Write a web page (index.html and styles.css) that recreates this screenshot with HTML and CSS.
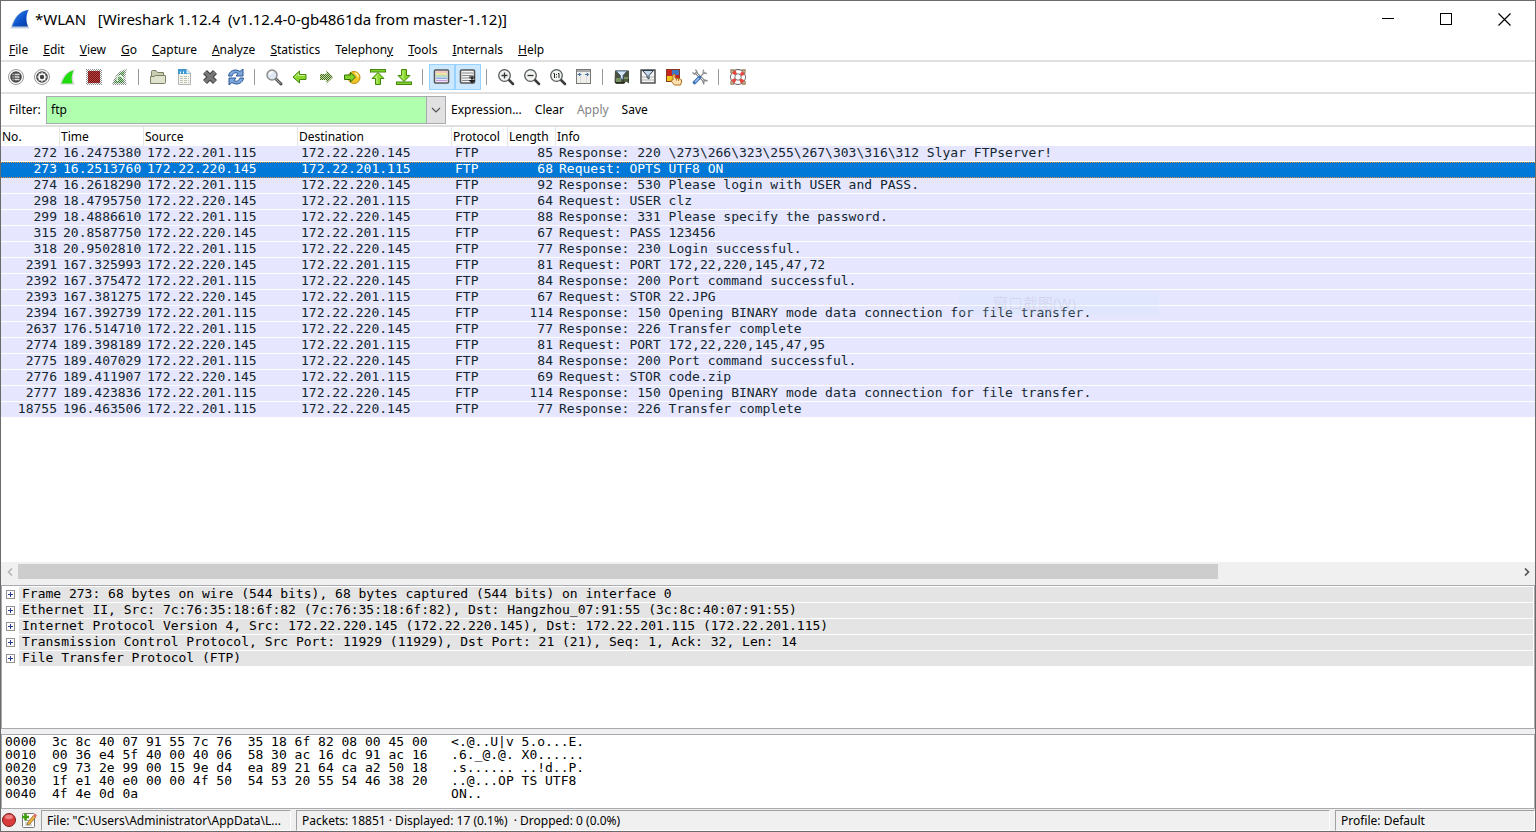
FILE: index.html
```html
<!DOCTYPE html>
<html lang="en">
<head>
    <meta charset="UTF-8">
    <meta name="viewport" content="width=device-width, initial-scale=1.0">
    <title>*WLAN [Wireshark 1.12.4]</title>
    <link rel="stylesheet" href="styles.css">
</head>
<body>

<div class="window">
    <header class="titlebar">
        <svg class="logo" width="20" height="20" viewBox="0 0 20 20">
            <defs>
                <linearGradient id="fin" x1="0" y1="0" x2="1" y2="1">
                    <stop offset="0" stop-color="#3c8ff0"/>
                    <stop offset="0.6" stop-color="#0b4fc8"/>
                    <stop offset="1" stop-color="#0a3f9c"/>
                </linearGradient>
            </defs>
            <path d="M0.500 19.500C3 10 8 2 19 0.500C15.500 6 16 14 19.500 19.500Z" fill="#c3cfdf"/>
            <path d="M2 17.500C5 9 9 2 18.500 1C15.500 6.500 16 13 18 17.500Z" fill="url(#fin)"/>
        </svg>
        <h1 class="title">*WLAN   [Wireshark 1.12.4  (v1.12.4-0-gb4861da from master-1.12)]</h1>
        <div class="window-buttons">
            <button type="button" aria-label="Minimize"><svg width="13" height="13" viewBox="0 0 13 13"><path d="M0 5.500H12" stroke="#000"/></svg></button>
            <button type="button" aria-label="Maximize"><svg width="13" height="13" viewBox="0 0 13 13"><rect x="0.500" y="0.500" width="11" height="11" fill="none" stroke="#000"/></svg></button>
            <button type="button" aria-label="Close"><svg width="13" height="13" viewBox="0 0 13 13"><path d="M0.500 0.500L12.500 12.500M12.500 0.500L0.500 12.500" stroke="#000" stroke-width="1.200"/></svg></button>
        </div>
    </header>

    <nav class="menubar">
        <a href="#"><u>F</u>ile</a>
        <a href="#"><u>E</u>dit</a>
        <a href="#"><u>V</u>iew</a>
        <a href="#"><u>G</u>o</a>
        <a href="#"><u>C</u>apture</a>
        <a href="#"><u>A</u>nalyze</a>
        <a href="#"><u>S</u>tatistics</a>
        <a href="#">Telephon<u>y</u></a>
        <a href="#"><u>T</u>ools</a>
        <a href="#"><u>I</u>nternals</a>
        <a href="#"><u>H</u>elp</a>
    </nav>

    <div class="toolbar">
        <button type="button" aria-label="Interfaces"><svg viewBox="0 0 18 18"><circle cx="9" cy="9" r="7.500" fill="#fff" stroke="#999"/><circle cx="9" cy="9" r="5.800" fill="#4a4a4a"/><path d="M5.500 6.500h1M5.500 9h1M5.500 11.500h1M7.500 6.500h5M7.500 9h5M7.500 11.500h5" stroke="#ddd" stroke-width="1.300"/></svg></button>
        <button type="button" aria-label="Capture options"><svg viewBox="0 0 18 18"><circle cx="9" cy="9" r="7.500" fill="#fff" stroke="#999"/><circle cx="9" cy="9" r="5.800" fill="#444"/><circle cx="9" cy="9" r="3" fill="#444" stroke="#fff" stroke-width="1.600"/><path d="M9 4.200v1.500M9 12.300v1.500M4.200 9h1.500M12.300 9h1.500M5.700 5.700l1 1M11.300 11.300l1 1M12.300 5.700l-1 1M6.700 11.300l-1 1" stroke="#fff" stroke-width="1.200"/></svg></button>
        <button type="button" aria-label="Start"><svg viewBox="0 0 18 18"><path d="M1 16.500C3 9 7 2.500 16 1.500C13.500 6 13.500 12 16 16.500Z" fill="#d8d8d8"/><path d="M2.500 15.500C5 9 8 4 14.500 2.500C12.500 7 12 11 13.500 15.500Z" fill="#1fdd0d"/></svg></button>
        <button type="button" aria-label="Stop"><svg viewBox="0 0 18 18"><defs><pattern id="dots-red" width="2" height="2" patternUnits="userSpaceOnUse"><rect width="2" height="2" fill="#c43c3c"/><rect width="1" height="1" fill="#6b1a1a"/><rect x="1" y="1" width="1" height="1" fill="#6b1a1a"/></pattern><pattern id="dots-gray" width="2" height="2" patternUnits="userSpaceOnUse"><rect width="1" height="1" fill="#8e8e8e"/><rect x="1" y="1" width="1" height="1" fill="#8e8e8e"/></pattern></defs><rect x="1" y="1" width="16" height="16" fill="url(#dots-gray)"/><rect x="3" y="3" width="12" height="12" fill="url(#dots-red)"/></svg></button>
        <button type="button" aria-label="Restart"><svg viewBox="0 0 18 18"><defs><pattern id="dots-green" width="2" height="2" patternUnits="userSpaceOnUse"><rect width="2" height="2" fill="#b9dcb0"/><rect width="1" height="1" fill="#3b7d3b"/><rect x="1" y="1" width="1" height="1" fill="#3b7d3b"/></pattern></defs><path d="M1 17C3 9 7 2 16 1C14 6 14 12 16 17Z" fill="url(#dots-gray)"/><path d="M3 15C5 9 8 4 14 3C12 7 12 11 13 15Z" fill="url(#dots-green)"/><path d="M7 13a3 3 0 1 1 5-2" fill="none" stroke="#fff" stroke-width="1.300"/></svg></button>
        <span class="divider"></span>
        <button type="button" aria-label="Open"><svg viewBox="0 0 18 18"><path d="M2.500 15.500V3.500Q2.500 2.500 3.500 2.500H7L8.500 4.500H14.500V8" fill="#c9ceb0" stroke="#7b8064"/><path d="M1.500 15.500V8.500H5L6.500 7.500H16.500V14.500Q16.500 15.500 15.500 15.500Z" fill="#dfe2cc" stroke="#7b8064"/></svg></button>
        <button type="button" aria-label="Save"><svg viewBox="0 0 18 18"><path d="M3.500 1.500H12L15.500 5V16.500H3.500Z" fill="#f7f7f0" stroke="#b4b4b4"/><path d="M3 1H11L15.500 6H3Z" fill="#3d97d0"/><path d="M11.500 1.500V5.500H15.500Z" fill="#d9edf9"/><path d="M5 4.500h1M8 4.500h1" stroke="#fff" stroke-width="2"/><path d="M5 8.500h9M5 10.500h9M5 12.500h9M5 14.500h9" stroke="#bcc4b8" stroke-dasharray="3 1"/></svg></button>
        <button type="button" aria-label="Close file"><svg viewBox="0 0 18 18"><path d="M4 4L14 14M14 4L4 14" stroke="#3d3d3d" stroke-width="5.600"/><path d="M4 4L14 14M14 4L4 14" stroke="#777" stroke-width="3.600"/></svg></button>
        <button type="button" aria-label="Reload"><svg viewBox="0 0 18 18"><path d="M1.500 8C2 3 8 0 13 3.500L16 1V8H9L11 5.500C8.500 4 6 5 5 8Z" fill="#7ea8dc" stroke="#2a5699" stroke-linejoin="round"/><path d="M16.500 10C16 15 10 18 5 14.500L2 17V10H9L7 12.500C9.500 14 12 13 13 10Z" fill="#7ea8dc" stroke="#2a5699" stroke-linejoin="round"/></svg></button>
        <span class="divider"></span>
        <button type="button" aria-label="Find"><svg viewBox="0 0 18 18"><path d="M10.500 10.500L16 16" stroke="#555" stroke-width="3" stroke-linecap="round"/><path d="M11 11L15.500 15.500" stroke="#aaa"/><circle cx="7" cy="7" r="5" fill="#dfe8f2" stroke="#8c8c8c" stroke-width="1.500"/><path d="M4.500 6.500Q5 4.500 7.500 4.300" fill="none" stroke="#fff" stroke-width="1.500"/></svg></button>
        <button type="button" aria-label="Back"><svg viewBox="0 0 18 18"><path d="M2 9L8.500 3V6.500H15V11.500H8.500V15Z" fill="#8ad82e" stroke="#43860c" stroke-linejoin="round"/><path d="M4 9L7.500 5.700V7.500H14" fill="none" stroke="#c5f28b"/></svg></button>
        <button type="button" aria-label="Forward"><svg viewBox="0 0 18 18"><defs><pattern id="dots-olive" width="2" height="2" patternUnits="userSpaceOnUse"><rect width="2" height="2" fill="#c3e0a0"/><rect width="1" height="1" fill="#466424"/><rect x="1" y="1" width="1" height="1" fill="#466424"/></pattern></defs><path d="M16 9L9.500 2.500V6H3V12H9.500V15.500Z" fill="url(#dots-olive)"/></svg></button>
        <button type="button" aria-label="Go to packet"><svg viewBox="0 0 18 18"><circle cx="11" cy="9.500" r="6" fill="#f0c62c" stroke="#c08b10"/><path d="M12 5Q15 6 15 9" fill="none" stroke="#fff1a0" stroke-width="1.500"/><path d="M12.500 9L7.500 4.500V7H1.500V11.500H7.500V14Z" fill="#82d42a" stroke="#356f08" stroke-linejoin="round"/></svg></button>
        <button type="button" aria-label="First packet"><svg viewBox="0 0 18 18"><rect x="1.500" y="1.500" width="15" height="2.500" fill="#82d42a" stroke="#43860c"/><path d="M9 4.500L15 10.500H11.500V16.500H6.500V10.500H3Z" fill="#8ad82e" stroke="#43860c" stroke-linejoin="round"/><path d="M8 15.500V9.500H6.500L9 6.500" fill="none" stroke="#c5f28b"/></svg></button>
        <button type="button" aria-label="Last packet"><svg viewBox="0 0 18 18"><rect x="1.500" y="14" width="15" height="2.500" fill="#82d42a" stroke="#43860c"/><path d="M9 13.500L15 7.500H11.500V1.500H6.500V7.500H3Z" fill="#8ad82e" stroke="#43860c" stroke-linejoin="round"/><path d="M8 2.500V8.500H6.500L9 11.500" fill="none" stroke="#c5f28b"/></svg></button>
        <span class="divider"></span>
        <button type="button" class="pressed" aria-label="Colorize" aria-pressed="true"><svg viewBox="0 0 18 18"><rect x="1.500" y="2" width="14" height="13" rx="1" fill="#fff" stroke="#555" stroke-width="1.600"/><path d="M3 4h11" stroke="#efb4b4" stroke-width="1.500"/><path d="M3 6h11" stroke="#e8dc7a" stroke-width="1.500"/><path d="M3 8h11" stroke="#9fd0b0" stroke-width="1.500"/><path d="M3 10.200h11" stroke="#86a8e0" stroke-width="1.500"/><path d="M3 12.500h11" stroke="#c39bdc" stroke-width="1.500"/></svg></button>
        <button type="button" class="pressed" aria-label="Auto scroll" aria-pressed="true"><svg viewBox="0 0 18 18"><rect x="1.500" y="2" width="14" height="13" rx="1" fill="#f4f4f4" stroke="#555" stroke-width="1.600"/><path d="M3 5h11M3 10h8" stroke="#bdbdbd" stroke-width="2"/><path d="M3 7.500h11M3 12.500h7" stroke="#8a8a8a"/><path d="M10 9h6M10 12.500h6M13 8v3" stroke="#222"/><path d="M10.500 9.500h5L13 12ZM10.500 13h5L13 15.500Z" fill="#222"/></svg></button>
        <span class="divider"></span>
        <button type="button" aria-label="Zoom in"><svg viewBox="0 0 18 18"><path d="M11.500 11.500L16 16" stroke="#3b3b3b" stroke-width="2.500" stroke-linecap="round"/><circle cx="7.500" cy="7.500" r="5.800" fill="#f2f4f2" stroke="#555b58" stroke-width="1.300"/><path d="M4.500 7.500h6M7.500 4.500v6" stroke="#333" stroke-width="1.300"/></svg></button>
        <button type="button" aria-label="Zoom out"><svg viewBox="0 0 18 18"><path d="M11.500 11.500L16 16" stroke="#3b3b3b" stroke-width="2.500" stroke-linecap="round"/><circle cx="7.500" cy="7.500" r="5.800" fill="#f2f4f2" stroke="#555b58" stroke-width="1.300"/><path d="M4.500 7.500h6" stroke="#333" stroke-width="1.300"/></svg></button>
        <button type="button" aria-label="Zoom 1:1"><svg viewBox="0 0 18 18"><path d="M11.500 11.500L16 16" stroke="#3b3b3b" stroke-width="2.500" stroke-linecap="round"/><circle cx="7.500" cy="7.500" r="5.800" fill="#f2f4f2" stroke="#555b58" stroke-width="1.300"/><path d="M4.500 5.500h1v4.500M9 5.500h1v4.500M7.500 6v1M7.500 8.500v1" fill="none" stroke="#222"/></svg></button>
        <button type="button" aria-label="Resize columns"><svg viewBox="0 0 18 18"><rect x="1.500" y="1.500" width="14" height="14" fill="#efefec" stroke="#777"/><path d="M2 3h13" stroke="#aaa" stroke-width="2"/><path d="M5.500 4v11M11.500 4v11" stroke="#dadad6"/><path d="M2.500 6.500h4M10 6.500h4M4.500 5v3M12.500 5v3" stroke="#456fa5"/></svg></button>
        <span class="divider"></span>
        <button type="button" aria-label="Capture filters"><svg viewBox="0 0 18 18"><path d="M2 2.500H16V15.500L13 13.500L11 16H3L1.500 14Z" fill="#4b5140"/><path d="M3 10h5v4h-5zM11 9h4v4h-4z" fill="#7a9263"/><path d="M2 14.500h10M10 12h6" stroke="#22251d"/><path d="M3 3H14L10 7.500V12L7.500 10V7.500Z" fill="#d9e8f6" stroke="#3a5c80" stroke-width=".800"/></svg></button>
        <button type="button" aria-label="Display filters"><svg viewBox="0 0 18 18"><rect x="2" y="2" width="14" height="13" fill="#f5f5f5" stroke="#444" stroke-width="1.400"/><path d="M3 9h12M3 12h12" stroke="#c8c8c8" stroke-width="1.500"/><path d="M3.500 2.500H14.500L10 7.500V11L8 9.500V7.500Z" fill="#c7d9ed" stroke="#27364a"/></svg></button>
        <button type="button" aria-label="Coloring rules"><svg viewBox="0 0 18 18"><rect x="1.500" y="1.500" width="13" height="12" fill="#c92222" stroke="#8a3a22"/><path d="M7 2h7v5H7z" fill="#3e72c4"/><path d="M2 8h6v5H2z" fill="#f2c61d"/><path d="M8 6.500Q9 5.500 10 6.500V10L15.500 11Q17 11.500 16.500 14L15.500 17H9.500L6 13Q6 11.500 8 12Z" fill="#ffe0b0" stroke="#b06e1e"/><path d="M11.500 10.500v2M13.500 11v2" stroke="#b06e1e"/></svg></button>
        <button type="button" aria-label="Preferences"><svg viewBox="0 0 18 18"><path d="M4.500 4.500L14 14" stroke="#888" stroke-width="2.600"/><path d="M4.500 4.500L14 14" stroke="#eee"/><path d="M1.500 4.500L3.500 6L6 4L4.500 1.500M16.500 13L14 12L12 14L13 16.500" fill="none" stroke="#888" stroke-width="1.400"/><path d="M14 4L10 8" stroke="#999" stroke-width="1.500"/><path d="M12.500 1.500L12 5L16 5.500" fill="none" stroke="#999" stroke-width="1.300"/><path d="M8.500 9.500L3.500 14.500" stroke="#3f72b5" stroke-width="3.600" stroke-linecap="round"/><path d="M8 10L4 14" stroke="#9cc2ee" stroke-width="1.500"/></svg></button>
        <span class="divider"></span>
        <button type="button" aria-label="Help"><svg viewBox="0 0 18 18"><path d="M2 5V2H5M13 2H16V5M2 13V16H5M13 16H16V13" fill="none" stroke="#a07c4c" stroke-width="1.300"/><circle cx="9" cy="9" r="5.300" fill="none" stroke="#5c5350" stroke-width="5.200"/><circle cx="9" cy="9" r="5.300" fill="none" stroke="#fff" stroke-width="3.600"/><circle cx="9" cy="9" r="5.300" fill="none" stroke="#e8443a" stroke-width="3.600" stroke-dasharray="3.320 5.005" stroke-dashoffset="-2.500"/></svg></button>
    </div>

    <form class="filterbar">
        <label for="filter">Filter:</label>
        <div class="combo">
            <input type="text" id="filter" name="filter" value="ftp" autocomplete="off">
            <button type="button" class="combo-arrow" aria-label="Show recent filters"><svg width="10" height="6" viewBox="0 0 10 6"><path d="M1 1L5 5L9 1" fill="none" stroke="#555" stroke-width="1.200"/></svg></button>
        </div>
        <button type="button">Expression...</button>
        <button type="button">Clear</button>
        <button type="button" disabled>Apply</button>
        <button type="button">Save</button>
    </form>

    <main class="packet-list">
        <table>
            <colgroup>
                <col class="c-no"><col class="c-time"><col class="c-addr"><col class="c-addr"><col class="c-proto"><col class="c-len"><col>
            </colgroup>
            <thead>
                <tr><th>No.</th><th>Time</th><th>Source</th><th>Destination</th><th>Protocol</th><th>Length</th><th>Info</th></tr>
            </thead>
            <tbody>
                <tr><td class="num">272</td><td>16.2475380</td><td>172.22.201.115</td><td>172.22.220.145</td><td>FTP</td><td class="num">85</td><td>Response: 220 \273\266\323\255\267\303\316\312 Slyar FTPserver!</td></tr>
                <tr class="selected"><td class="num">273</td><td>16.2513760</td><td>172.22.220.145</td><td>172.22.201.115</td><td>FTP</td><td class="num">68</td><td>Request: OPTS UTF8 ON</td></tr>
                <tr><td class="num">274</td><td>16.2618290</td><td>172.22.201.115</td><td>172.22.220.145</td><td>FTP</td><td class="num">92</td><td>Response: 530 Please login with USER and PASS.</td></tr>
                <tr><td class="num">298</td><td>18.4795750</td><td>172.22.220.145</td><td>172.22.201.115</td><td>FTP</td><td class="num">64</td><td>Request: USER clz</td></tr>
                <tr><td class="num">299</td><td>18.4886610</td><td>172.22.201.115</td><td>172.22.220.145</td><td>FTP</td><td class="num">88</td><td>Response: 331 Please specify the password.</td></tr>
                <tr><td class="num">315</td><td>20.8587750</td><td>172.22.220.145</td><td>172.22.201.115</td><td>FTP</td><td class="num">67</td><td>Request: PASS 123456</td></tr>
                <tr><td class="num">318</td><td>20.9502810</td><td>172.22.201.115</td><td>172.22.220.145</td><td>FTP</td><td class="num">77</td><td>Response: 230 Login successful.</td></tr>
                <tr><td class="num">2391</td><td>167.325993</td><td>172.22.220.145</td><td>172.22.201.115</td><td>FTP</td><td class="num">81</td><td>Request: PORT 172,22,220,145,47,72</td></tr>
                <tr><td class="num">2392</td><td>167.375472</td><td>172.22.201.115</td><td>172.22.220.145</td><td>FTP</td><td class="num">84</td><td>Response: 200 Port command successful.</td></tr>
                <tr><td class="num">2393</td><td>167.381275</td><td>172.22.220.145</td><td>172.22.201.115</td><td>FTP</td><td class="num">67</td><td>Request: STOR 22.JPG</td></tr>
                <tr><td class="num">2394</td><td>167.392739</td><td>172.22.201.115</td><td>172.22.220.145</td><td>FTP</td><td class="num">114</td><td>Response: 150 Opening BINARY mode data connection for file transfer.</td></tr>
                <tr><td class="num">2637</td><td>176.514710</td><td>172.22.201.115</td><td>172.22.220.145</td><td>FTP</td><td class="num">77</td><td>Response: 226 Transfer complete</td></tr>
                <tr><td class="num">2774</td><td>189.398189</td><td>172.22.220.145</td><td>172.22.201.115</td><td>FTP</td><td class="num">81</td><td>Request: PORT 172,22,220,145,47,95</td></tr>
                <tr><td class="num">2775</td><td>189.407029</td><td>172.22.201.115</td><td>172.22.220.145</td><td>FTP</td><td class="num">84</td><td>Response: 200 Port command successful.</td></tr>
                <tr><td class="num">2776</td><td>189.411907</td><td>172.22.220.145</td><td>172.22.201.115</td><td>FTP</td><td class="num">69</td><td>Request: STOR code.zip</td></tr>
                <tr><td class="num">2777</td><td>189.423836</td><td>172.22.201.115</td><td>172.22.220.145</td><td>FTP</td><td class="num">114</td><td>Response: 150 Opening BINARY mode data connection for file transfer.</td></tr>
                <tr><td class="num">18755</td><td>196.463506</td><td>172.22.201.115</td><td>172.22.220.145</td><td>FTP</td><td class="num">77</td><td>Response: 226 Transfer complete</td></tr>
            </tbody>
        </table>
        <div class="fading-menu" lang="zh">窗口截图(W)</div>
    </main>

    <div class="scrollbar">
        <button type="button" aria-label="Scroll left"><svg width="6" height="8" viewBox="0 0 6 8"><path d="M5 .500L1.500 4L5 7.500" fill="none" stroke="#b5b5b5" stroke-width="1.600"/></svg></button>
        <div class="track"><div class="thumb"></div></div>
        <button type="button" aria-label="Scroll right"><svg width="6" height="8" viewBox="0 0 6 8"><path d="M1 .500L4.500 4L1 7.500" fill="none" stroke="#505050" stroke-width="1.600"/></svg></button>
    </div>

    <section class="pane details">
        <ul>
            <li><button type="button" class="expander" aria-label="Expand"></button><span>Frame 273: 68 bytes on wire (544 bits), 68 bytes captured (544 bits) on interface 0</span></li>
            <li><button type="button" class="expander" aria-label="Expand"></button><span>Ethernet II, Src: 7c:76:35:18:6f:82 (7c:76:35:18:6f:82), Dst: Hangzhou_07:91:55 (3c:8c:40:07:91:55)</span></li>
            <li><button type="button" class="expander" aria-label="Expand"></button><span>Internet Protocol Version 4, Src: 172.22.220.145 (172.22.220.145), Dst: 172.22.201.115 (172.22.201.115)</span></li>
            <li><button type="button" class="expander" aria-label="Expand"></button><span>Transmission Control Protocol, Src Port: 11929 (11929), Dst Port: 21 (21), Seq: 1, Ack: 32, Len: 14</span></li>
            <li><button type="button" class="expander" aria-label="Expand"></button><span>File Transfer Protocol (FTP)</span></li>
        </ul>
    </section>

    <section class="pane bytes">
<pre>0000  3c 8c 40 07 91 55 7c 76  35 18 6f 82 08 00 45 00   &lt;.@..U|v 5.o...E.
0010  00 36 e4 5f 40 00 40 06  58 30 ac 16 dc 91 ac 16   .6._@.@. X0......
0020  c9 73 2e 99 00 15 9e d4  ea 89 21 64 ca a2 50 18   .s...... ..!d..P.
0030  1f e1 40 e0 00 00 4f 50  54 53 20 55 54 46 38 20   ..@...OP TS UTF8 
0040  4f 4e 0d 0a                                        ON..</pre>
    </section>

    <footer class="statusbar">
        <button type="button" aria-label="Expert info"><svg width="16" height="16" viewBox="0 0 16 16"><circle cx="8" cy="8" r="6.500" fill="#d93a3a" stroke="#7c1f1f"/><ellipse cx="8" cy="5" rx="4" ry="2.200" fill="#ec8080"/></svg></button>
        <button type="button" aria-label="Capture comments"><svg width="16" height="16" viewBox="0 0 16 16"><rect x="1.500" y="1.500" width="12" height="14" rx="1" fill="#fff" stroke="#777"/><path d="M4 8.500h7M4 11h6M4 13h7" stroke="#aaa"/><path d="M1 5h7M4.500 1.500v7" stroke="#3f9e10" stroke-width="2.600"/><path d="M6 13L7 10L12.500 3.500L14.500 5.500L9 12Z" fill="#eab543" stroke="#80571b" stroke-width=".700"/><path d="M12 4L14 1.500L16 3.500L14.500 5.500Z" fill="#e46d6d"/></svg></button>
        <div class="cell cell-file">File: "C:\Users\Administrator\AppData\L...</div>
        <div class="cell cell-packets">Packets: 18851 · Displayed: 17 (0.1%)  · Dropped: 0 (0.0%)</div>
        <div class="cell cell-profile">Profile: Default</div>
    </footer>
</div>

</body>
</html>
```
FILE: styles.css
```css
* {
    box-sizing: border-box;
}

body {
    margin: 0;
    font-family: "Noto Sans", "Noto Sans CJK SC", sans-serif;
    font-size: 12px;
    color: #000;
    background-color: #f0f0f0;
}

button {
    font: inherit;
    color: inherit;
    background: none;
    border: none;
    padding: 0;
    margin: 0;
}

svg {
    display: block;
}

.window {
    display: flex;
    flex-direction: column;
    min-height: 100vh;
    border: 1px solid #6b6b6b;
}

/* title bar and menu */
.titlebar {
    display: flex;
    align-items: center;
    height: 36px;
    padding: 0 2px 0 9px;
    background-color: #fff;
}

.title {
    flex: 1;
    margin: 0 0 0 5px;
    font-size: 15px;
    font-weight: normal;
    white-space: pre;
}

.window-buttons {
    display: flex;
}

.window-buttons button {
    display: flex;
    align-items: center;
    justify-content: center;
    width: 58px;
    height: 36px;
}

.menubar {
    display: flex;
    align-items: center;
    gap: 15px;
    height: 25px;
    padding: 2px 8px 0;
    background-color: #fff;
    border-bottom: 2px solid #e0e0e0;
}

.menubar a {
    color: #000;
    text-decoration: none;
}

/* main toolbar */
.toolbar {
    display: flex;
    align-items: center;
    height: 32px;
    padding: 0 2px;
    background-color: #fff;
    border-bottom: 2px solid #e0e0e0;
}

.toolbar button {
    display: flex;
    align-items: center;
    justify-content: center;
    width: 26px;
    height: 26px;
}

.toolbar svg {
    width: 18px;
    height: 18px;
}

.toolbar .pressed {
    background-color: #cce8ff;
    border: 1px solid #99d1ff;
}

.divider {
    width: 12px;
    height: 16px;
    background: linear-gradient(#999, #999) 5px 0 / 1px 100% no-repeat;
}

/* filter toolbar */
.filterbar {
    display: flex;
    align-items: center;
    gap: 13px;
    height: 33px;
    padding-left: 8px;
    background-color: #fff;
    border-bottom: 2px solid #e0e0e0;
}

.filterbar label {
    width: 37px;
    margin-right: -13px;
}

.filterbar button:disabled {
    color: #838383;
}

.combo {
    display: flex;
    width: 400px;
    height: 28px;
    margin-right: -8px;
    border: 1px solid #a9a9b0;
}

.combo input {
    flex: 1;
    min-width: 0;
    padding: 0 4px;
    border: none;
    outline: none;
    font: inherit;
    background-color: #afffaf;
}

.combo-arrow {
    display: flex;
    align-items: center;
    justify-content: center;
    width: 19px;
    background-color: #e1e1e1;
    border-left: 1px solid #a9a9b0;
}

/* packet list */
.packet-list {
    position: relative;
    flex: 1;
    background-color: #fff;
}

.packet-list table {
    width: 100%;
    table-layout: fixed;
    border-collapse: separate;
    border-spacing: 0;
}

.c-no { width: 59px; }
.c-time { width: 84px; }
.c-addr { width: 154px; }
.c-proto { width: 56px; }
.c-len { width: 48px; }

.packet-list th {
    height: 19px;
    padding: 0 1px;
    border-right: 1px solid #e5e5e5;
    font-weight: normal;
    line-height: 18px;
    text-align: left;
    white-space: nowrap;
}

.packet-list th:last-child {
    border-right: none;
}

.packet-list td {
    height: 16px;
    padding: 0 0 0 3px;
    border-bottom: 1px solid #fff;
    background-color: #e6e6ff;
    color: #12272e;
    font-family: "DejaVu Sans Mono", monospace;
    font-size: 13px;
    line-height: 13px;
    vertical-align: top;
    white-space: pre;
    overflow: hidden;
}

.packet-list .num {
    padding: 0 3px 0 0;
    text-align: right;
}

.packet-list .selected td {
    color: #fff;
    background-color: #0078d7;
    background-image:
        repeating-linear-gradient(90deg, #e08a3c 0 1px, #0078d7 1px 2px),
        repeating-linear-gradient(90deg, #e08a3c 0 1px, #0078d7 1px 2px);
    background-size: 100% 1px;
    background-position: top, bottom;
    background-repeat: no-repeat;
    border-bottom: none;
}

/* screenshot tool menu that is fading out over the list */
.fading-menu {
    position: absolute;
    top: 164px;
    left: 958px;
    width: 200px;
    height: 24px;
    padding-left: 34px;
    font-size: 15px;
    line-height: 24px;
    color: rgba(90, 50, 60, 0.1);
    background-color: rgba(205, 228, 255, 0.2);
}

.scrollbar {
    display: flex;
    height: 23px;
    padding: 2px 0 6px;
    background-color: #f0f0f0;
}

.scrollbar button {
    display: flex;
    align-items: center;
    justify-content: center;
    width: 17px;
}

.track {
    flex: 1;
}

.thumb {
    width: 80%;
    height: 15px;
    background-color: #cdcdcd;
}

/* lower panes */
.pane {
    background-color: #fff;
    border: 1px solid #a9a9b0;
    font-family: "DejaVu Sans Mono", monospace;
    font-size: 13px;
}

.details {
    min-height: 144px;
    margin-bottom: 5px;
}

.details ul {
    margin: 0;
    padding: 1px 1px 0 4px;
    list-style: none;
}

.details li {
    display: flex;
    align-items: center;
    gap: 4px;
    height: 15px;
    margin-bottom: 1px;
}

.details li span {
    flex: 1;
    height: 15px;
    padding-left: 3px;
    line-height: 14px;
    white-space: pre;
    background-color: #e4e4e4;
}

.expander {
    width: 9px;
    height: 9px;
    border: 1px solid #919191;
    background:
        linear-gradient(#2b3f8c, #2b3f8c) center / 5px 1px no-repeat,
        linear-gradient(#2b3f8c, #2b3f8c) center / 1px 5px no-repeat,
        #fff;
}

.bytes {
    min-height: 75px;
}

.bytes pre {
    margin: 0;
    padding: 0 3px;
    font: inherit;
    line-height: 13px;
}

/* status bar */
.statusbar {
    display: flex;
    align-items: center;
    height: 22px;
}

.statusbar button {
    width: 20px;
}

.cell {
    height: 21px;
    padding-left: 5px;
    border: 1px solid #a0a0a0;
    border-right-color: #fff;
    border-bottom-color: #fff;
    line-height: 20px;
    white-space: pre;
    overflow: hidden;
}

.cell-file {
    width: 250px;
    margin-right: 5px;
}

.cell-packets {
    flex: 1;
    margin-right: 5px;
}

.cell-profile {
    width: 200px;
}
```
